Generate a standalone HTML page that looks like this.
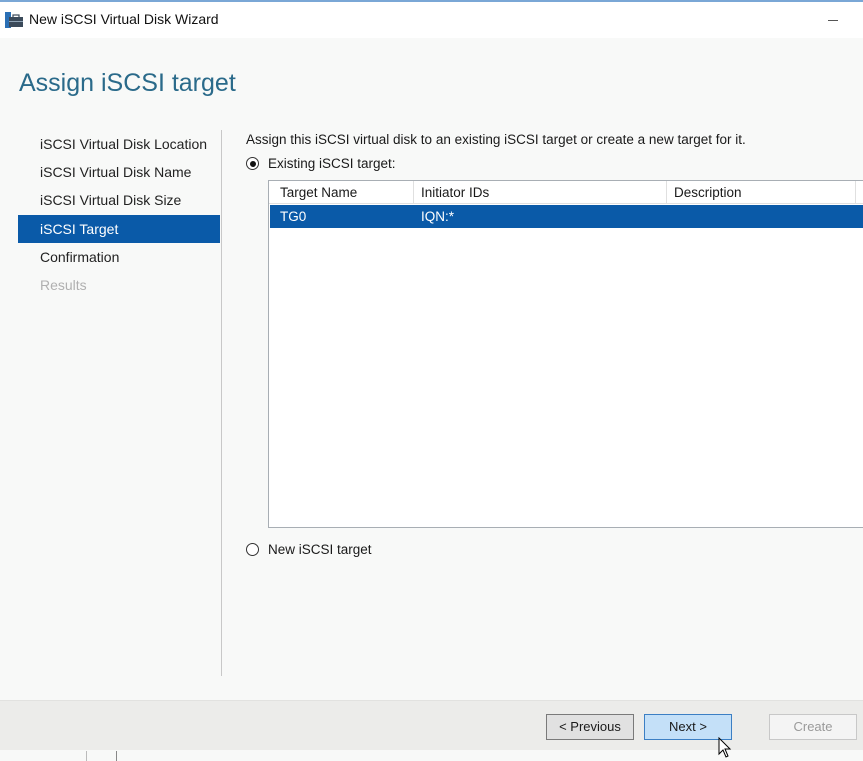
<!DOCTYPE html>
<html><head><meta charset="utf-8"><style>
*{margin:0;padding:0;box-sizing:border-box}
body{width:863px;height:761px;overflow:hidden;background:#f8f9f8;font-family:"Liberation Sans",sans-serif;position:relative;color:#1a1a1a}
.abs{position:absolute}
.title{left:0;top:0;width:863px;height:38px;background:#fff;border-top:2px solid #7aa7d6}
.side{font-size:14px;color:#222;left:40px}
.btn{position:absolute;top:714px;height:26px;font-size:13px;text-align:center;line-height:24px}
</style></head><body>
<div class="abs title">
 <svg class="abs" style="left:5px;top:10px" width="18" height="16" viewBox="0 0 18 16">
  <rect x="0" y="0" width="6" height="16" fill="#2a6fb5"/>
  <rect x="4" y="5" width="14" height="10" fill="#3b4a5a"/>
  <rect x="8" y="3" width="6" height="3" fill="none" stroke="#3b4a5a" stroke-width="1.2"/>
  <rect x="4" y="9" width="14" height="1" fill="#8fa3b5"/>
 </svg>
 <div class="abs" style="left:29px;top:9px;font-size:14px;color:#111">New iSCSI Virtual Disk Wizard</div>
 <div class="abs" style="left:828px;width:10px;height:1px;background:#555;top:18px"></div>
</div>
<div class="abs" style="left:19px;top:69px;font-size:25px;color:#2a6a8a">Assign iSCSI target</div>

<div class="abs side" style="top:136px">iSCSI Virtual Disk Location</div>
<div class="abs side" style="top:164px">iSCSI Virtual Disk Name</div>
<div class="abs side" style="top:192px">iSCSI Virtual Disk Size</div>
<div class="abs" style="left:18px;top:215px;width:202px;height:28px;background:#0a5aa8"></div>
<div class="abs side" style="top:221px;color:#fff">iSCSI Target</div>
<div class="abs side" style="top:249px">Confirmation</div>
<div class="abs side" style="top:277px;color:#b0b0b0">Results</div>
<div class="abs" style="left:221px;top:130px;width:1px;height:546px;background:#c8c8c8"></div>

<div class="abs" style="left:246px;top:132px;font-size:13.5px">Assign this iSCSI virtual disk to an existing iSCSI target or create a new target for it.</div>
<div class="abs" style="left:246px;top:157px;width:13px;height:13px;border:1px solid #333;border-radius:50%;background:#fff"></div>
<div class="abs" style="left:249.5px;top:160.5px;width:6px;height:6px;border-radius:50%;background:#111"></div>
<div class="abs" style="left:268px;top:156px;font-size:13.5px">Existing iSCSI target:</div>

<div class="abs" style="left:268px;top:180px;width:600px;height:348px;background:#fff;border:1px solid #a8aeb4"></div>
<div class="abs" style="left:269px;top:181px;width:600px;height:23px;background:#fff;border-bottom:1px solid #e0e0e0"></div>
<div class="abs" style="left:413px;top:181px;width:1px;height:23px;background:#e0e0e0"></div>
<div class="abs" style="left:666px;top:181px;width:1px;height:23px;background:#e0e0e0"></div>
<div class="abs" style="left:855px;top:181px;width:1px;height:23px;background:#e0e0e0"></div>
<div class="abs" style="left:280px;top:185px;font-size:13.5px">Target Name</div>
<div class="abs" style="left:421px;top:185px;font-size:13.5px">Initiator IDs</div>
<div class="abs" style="left:674px;top:185px;font-size:13.5px">Description</div>
<div class="abs" style="left:270px;top:205px;width:593px;height:23px;background:#0a5aa8"></div>
<div class="abs" style="left:280px;top:209px;font-size:13.5px;color:#fff">TG0</div>
<div class="abs" style="left:421px;top:209px;font-size:13.5px;color:#fff">IQN:*</div>

<div class="abs" style="left:246px;top:543px;width:13px;height:13px;border:1px solid #333;border-radius:50%;background:#fff"></div>
<div class="abs" style="left:268px;top:542px;font-size:13.5px">New iSCSI target</div>

<div class="abs" style="left:0;top:700px;width:863px;height:50px;background:#ececea;border-top:1px solid #e2e2e0"></div>
<div class="abs" style="left:0;top:750px;width:863px;height:11px;background:#f8f9f8"></div>
<div class="abs" style="left:86px;top:751px;width:1px;height:10px;background:#bbb"></div>
<div class="abs" style="left:116px;top:751px;width:1px;height:10px;background:#888"></div>
<div class="btn" style="left:546px;width:88px;background:#e1e1e1;border:1px solid #7a7a7a">&lt; Previous</div>
<div class="btn" style="left:644px;width:88px;background:#c4e0f8;border:1px solid #3c7fc4">Next &gt;</div>
<div class="btn" style="left:769px;width:88px;background:#f4f4f4;border:1px solid #c8c8c8;color:#9a9a9a">Create</div>
<svg class="abs" style="left:718px;top:737px" width="14" height="22" viewBox="0 0 14 22"><path d="M1 1 L1 17 L5 13 L8 20 L10 19 L7 12 L12 12 Z" fill="#fff" stroke="#000" stroke-width="1"/></svg>
</body></html>
